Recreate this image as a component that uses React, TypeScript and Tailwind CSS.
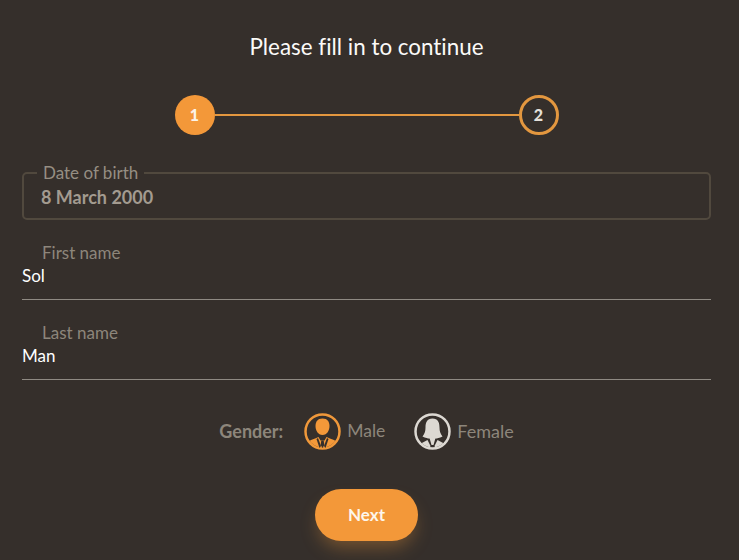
export default function App() {
  return (
    <main className="h-[560px] w-[739px] overflow-hidden bg-[#352f2b] font-['Lato','Liberation_Sans',sans-serif] [font-variant-ligatures:none] text-white">
      <div className="w-[733px]">
        <h1 className="pt-[33px] text-center text-[22.4px] leading-[28px] font-normal text-[#fbfaf8]">Please fill in to continue</h1>

        <div className="mt-[34px] flex items-center justify-center">
          <div className="flex h-10 w-10 items-center justify-center rounded-full bg-[#f39839] text-[16px] font-black text-[#fbf3e8]">1</div>
          <div className="h-[2px] w-[304px] bg-[#e3973f]"></div>
          <div className="flex h-10 w-10 items-center justify-center rounded-full border-[3px] border-[#e3973f] text-[16px] font-black text-[#e4e0da]">2</div>
        </div>

        <div className="mt-[28px] px-[22px]">
          <fieldset className="h-[57px] rounded-[5px] border-2 border-[#51493e] pl-[13px]">
            <legend className="px-[6px] text-[17px] leading-[20px] text-[#968e83]">Date of birth</legend>
            <div className="mt-[3px] pl-[4px] text-[18px] leading-[22px] font-bold text-[#a39b90]">8 March 2000</div>
          </fieldset>

          <div className="mt-[23px] h-[57px] border-b border-[#8f8a83]">
            <div className="pl-[20px] text-[17px] leading-[20px] text-[#8d867b]">First name</div>
            <div className="mt-[1px] text-[17px] leading-[24px] text-white">Sol</div>
          </div>

          <div className="mt-[23px] h-[57px] border-b border-[#8f8a83]">
            <div className="pl-[20px] text-[17px] leading-[20px] text-[#8d867b]">Last name</div>
            <div className="mt-[1px] text-[17px] leading-[24px] text-white">Man</div>
          </div>
        </div>

        <div className="mt-[33px] flex items-center justify-center">
          <span className="text-[18px] font-bold text-[#8d867b]">Gender:</span>
          <svg className="ml-[21px]" width="37" height="37" viewBox="0 0 37 37">
            <defs>
              <clipPath id="maleClip"><circle cx="18.5" cy="18.5" r="16" /></clipPath>
            </defs>
            <circle cx="18.5" cy="18.5" r="17" fill="none" stroke="#f0983a" strokeWidth="2.5" />
            <g clipPath="url(#maleClip)" fill="#f39839">
              <path d="M18.5 5.5C13.5 5.5 11.5 9 11.5 13C11.5 17.5 14 22 18.5 22C23 22 25.5 17.5 25.5 13C25.5 9 23.5 5.5 18.5 5.5Z" />
              <path d="M2 37V30C5 27.5 10 26 14.5 24L16.5 27.5H20.5L22.5 24C27 26 32 27.5 35 30V37Z" />
            </g>
            <path d="M17.3 27.5H19.7L20.3 32L18.5 35L16.7 32Z" fill="#352f2b" />
            <path d="M14 25L17 33L15.5 35L12.5 26Z" fill="#352f2b" />
            <path d="M23 25L20 33L21.5 35L24.5 26Z" fill="#352f2b" />
          </svg>
          <span className="ml-[6px] text-[17.5px] text-[#8d867b]">Male</span>
          <svg className="ml-[29px]" width="37" height="37" viewBox="0 0 37 37">
            <defs>
              <clipPath id="femaleClip"><circle cx="18.5" cy="18.5" r="16" /></clipPath>
            </defs>
            <circle cx="18.5" cy="18.5" r="17" fill="none" stroke="#dcd8d2" strokeWidth="2.5" />
            <g clipPath="url(#femaleClip)" fill="#dcd8d2">
              <path d="M18.5 5.5C13 5.5 11.5 9.5 11.5 14.5C11.5 18.5 10.5 21 8.5 23.5C11.5 25 14 25.5 15.5 25.5H21.5C23 25.5 25.5 25 28.5 23.5C26.5 21 25.5 18.5 25.5 14.5C25.5 9.5 24 5.5 18.5 5.5Z" />
              <path d="M6 37V31L13.5 27L16.5 33L15 37Z" />
              <path d="M31 37V31L23.5 27L20.5 33L22 37Z" />
              <path d="M15.5 25H21.5L19.5 32H17.5Z" />
            </g>
          </svg>
          <span className="ml-[6px] text-[18px] text-[#8d867b]">Female</span>
        </div>

        <div className="mt-[39px] flex justify-center">
          <button className="h-[52px] w-[103px] rounded-full bg-[#f39839] text-[17px] font-bold text-[#fdf6ec] shadow-[0_10px_18px_-4px_rgba(245,154,56,0.35)]">Next</button>
        </div>
      </div>
    </main>
  );
}
